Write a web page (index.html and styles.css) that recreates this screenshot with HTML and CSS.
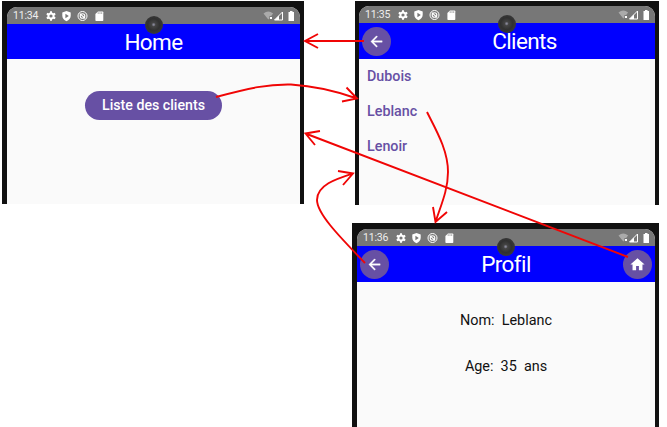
FILE: index.html
```
<!DOCTYPE html>
<html lang="fr">
<head>
<meta charset="utf-8">
<title>Navigation</title>
<link rel="stylesheet" href="styles.css">
</head>
<body>
<svg class="defs" width="0" height="0">
  <symbol id="left-icons" viewBox="0 0 60 12">
    <g fill="#fff">
      <circle cx="6" cy="6" r="2.6" fill="none" stroke="#fff" stroke-width="2"/>
      <path d="M6 1.2v2M6 8.8v2M1.8 3.6l1.8 1M8.4 7.4l1.8 1M1.8 8.4l1.8-1M8.4 4.6l1.8-1" stroke="#fff" stroke-width="2"/>
      <path fill-rule="evenodd" d="M21.500 1l4.200 1.600v3.200c0 2.600-1.700 4.400-4.200 5.400-2.500-1-4.200-2.800-4.200-5.400V2.600zM20.400 3.800v4.400l3.400-2.200z"/>
      <path d="M53 1.400h4.500q.8 0 .8.800v8q0 .8-.8.800h-6.300q-.8 0-.8-.8V4z"/>
    </g>
    <path d="M53.200 2.200v1.800M55 2.200v1.800M56.700 2.200v1.800" stroke="#777" stroke-width=".6"/>
    <g fill="none" stroke="#fff">
      <circle cx="37.500" cy="6" r="4.500" stroke-width="1"/>
      <circle cx="37.500" cy="6" r="2.300" stroke-width="1.100"/>
      <path d="M34.800 3.600l5.200 4.600" stroke-width="1.200"/>
    </g>
  </symbol>
  <symbol id="right-icons" viewBox="0 0 32 12">
    <path d="M.5 3.600Q5.300-.4 10.100 3.600L8.200 6H6.400v2.500L5.300 9.500z" fill="#aaa"/>
    <path d="M7 7h2v2H7z" fill="#fff"/>
    <path d="M19.500 2v8h-8z" fill="none" stroke="#fff" stroke-width="1"/>
    <path d="M16 5.500V10h-4.500z" fill="#fff"/>
    <path d="M27 1h2.500v1H31v9h-5.500V2H27z" fill="#fff"/>
  </symbol>
  <symbol id="back" viewBox="0 0 24 24">
    <path d="M20 11H7.830l5.590-5.590L12 4l-8 8 8 8 1.410-1.410L7.830 13H20z" fill="#fff" stroke="#fff" stroke-width=".5"/>
  </symbol>
  <symbol id="home" viewBox="0 0 24 24">
    <path d="M10 20v-6h4v6h5v-8h3L12 3 2 12h3v8z" fill="#fff"/>
  </symbol>
</svg>

<main class="board">
  <section class="phone phone-home">
    <div class="screen">
      <div class="status">
        <span class="time">11:34</span>
        <svg class="left-icons"><use href="#left-icons"/></svg>
        <svg class="right-icons"><use href="#right-icons"/></svg>
        <i class="camera"></i>
      </div>
      <header class="bar"><h1>Home</h1></header>
      <div class="content"><button class="pill">Liste des clients</button></div>
    </div>
  </section>

  <div class="column">
    <section class="phone phone-clients">
      <div class="screen">
        <div class="status">
          <span class="time">11:35</span>
          <svg class="left-icons"><use href="#left-icons"/></svg>
          <svg class="right-icons"><use href="#right-icons"/></svg>
          <i class="camera"></i>
        </div>
        <header class="bar">
          <button class="round"><svg><use href="#back"/></svg></button>
          <h1>Clients</h1>
        </header>
        <ul class="clients"><li>Dubois</li><li>Leblanc</li><li>Lenoir</li></ul>
      </div>
    </section>

    <section class="phone phone-profile">
      <div class="screen">
        <div class="status">
          <span class="time">11:36</span>
          <svg class="left-icons"><use href="#left-icons"/></svg>
          <svg class="right-icons"><use href="#right-icons"/></svg>
          <i class="camera"></i>
        </div>
        <header class="bar">
          <button class="round"><svg><use href="#back"/></svg></button>
          <h1>Profil</h1>
          <button class="round"><svg class="house"><use href="#home"/></svg></button>
        </header>
        <div class="profile"><p>Nom:&nbsp; Leblanc</p><p>Age:&nbsp; 35&nbsp; ans</p></div>
      </div>
    </section>
  </div>

  <svg class="arrows" viewBox="0 0 667 427">
    <path d="M364 41H305M318 34L305 41L318 48"/>
    <path d="M216 97C250 88 268 84 291 84.500C315 86 336 91 357 98.500M346.500 87.500L357 98.500L342 101.500"/>
    <path d="M427 112C436 130 448 150 448 172C448 190 441 205 435.500 222M433 207L435.500 222L447 212"/>
    <path d="M628 257L305.500 133.500M320 131L305.500 133.500L315 145"/>
    <path d="M365 263C345 242 317 215 317 200C317 185 336 179 353 173.500M338 171L353 173.500L343 185"/>
  </svg>
</main>
</body>
</html>
```

FILE: styles.css
```
* { box-sizing: border-box; }

body {
  margin: 0;
  background: #fff;
  font-family: Roboto, sans-serif;
}

.defs { position: absolute; }

.board {
  position: relative;
  display: flex;
  align-items: flex-start;
  justify-content: space-between;
  width: 667px;
  height: 427px;
  padding: 1px 8px 0 2px;
  overflow: hidden;
}

.column {
  display: flex;
  flex-direction: column;
  align-items: flex-end;
  gap: 18px;
}

.phone { background: #111; }
.phone-home { width: 302px; height: 203px; padding: 6px 4px 0 5px; }
.phone-clients { width: 304px; height: 204px; padding: 5px 4px 0 4px; }
.phone-profile { width: 307px; height: 204px; padding: 6px 4px 0 5px; }

.screen {
  height: 100%;
  background: #fafafa;
  border-radius: 10px 10px 0 0;
}

.status {
  position: relative;
  display: flex;
  align-items: center;
  height: 17px;
  padding: 0 5px 0 6px;
  border-radius: 10px 10px 0 0;
  background: #777;
}

.time {
  width: 32px;
  font-size: 10.5px;
  letter-spacing: -.2px;
  line-height: 17px;
  color: #eee;
}

.left-icons { width: 60px; height: 12px; }
.right-icons { width: 32px; height: 12px; margin-left: auto; }

.camera {
  position: absolute;
  left: 50%;
  top: 9px;
  width: 18px;
  height: 18px;
  margin-left: -9px;
  border-radius: 50%;
  background: radial-gradient(circle at 48% 48%, #889 0 .5px, #444 2px, #303030 6px, #383838 9px);
}

.bar {
  display: flex;
  align-items: center;
  height: 36px;
  padding: 0 3px;
  background: #00f;
}
.phone-home .bar { height: 35px; }

h1 {
  flex: 1;
  margin: 0;
  font-size: 22.500px;
  font-weight: 400;
  letter-spacing: -.6px;
  line-height: 36px;
  text-align: center;
  color: #fff;
}
.phone-clients h1 { padding-left: 6px; }

.round {
  display: flex;
  align-items: center;
  justify-content: center;
  width: 29px;
  height: 29px;
  padding: 0;
  border: 0;
  border-radius: 50%;
  background: #6750a4;
}
.round svg { width: 17px; height: 17px; }

.content { display: flex; justify-content: center; padding-top: 32px; }

.pill {
  width: 137px;
  height: 29px;
  padding: 0;
  border: 0;
  border-radius: 15px;
  background: #6750a4;
  color: #fff;
  font: 500 14.200px/29px Roboto, sans-serif;
}

.clients {
  margin: 0;
  padding: 0 0 0 8px;
  list-style: none;
  color: #6750a4;
  font-size: 14.300px;
  font-weight: 500;
  line-height: 35px;
}

.profile {
  padding-top: 16px;
  text-align: center;
  font-size: 14.400px;
  line-height: 46px;
  color: #111;
}
.profile p { margin: 0; }

.arrows {
  position: absolute;
  inset: 0;
  width: 667px;
  height: 427px;
  fill: none;
  stroke: #f00505;
  stroke-width: 1.900;
  pointer-events: none;
}
```
